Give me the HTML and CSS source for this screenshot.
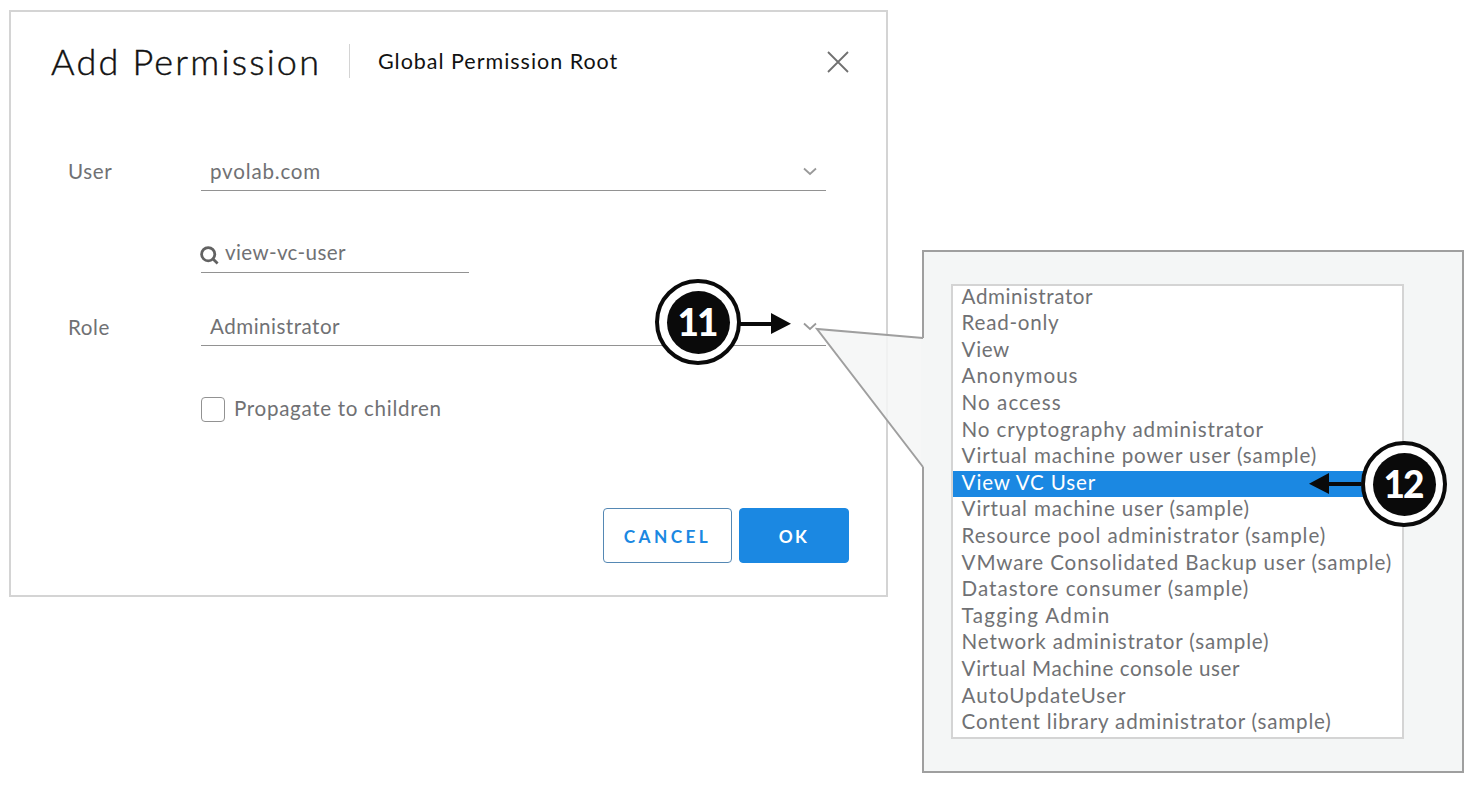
FILE: index.html
```html
<!DOCTYPE html>
<html lang="en">
<head>
<meta charset="utf-8">
<title>Add Permission</title>
<link rel="stylesheet" href="styles.css">
</head>
<body>
<main class="stage">
  <section class="dialog">
    <header class="dialog-header">
      <h1 class="title">Add Permission</h1>
      <span class="divider"></span>
      <span class="subtitle">Global Permission Root</span>
      <svg class="close" viewBox="0 0 22 22"><path d="M1 1L21 21M21 1L1 21"/></svg>
    </header>
    <div class="form">
      <div class="row row-user">
        <label class="label"><span class="t-user">User</span></label>
        <div class="select"><span class="t-domain">pvolab.com</span><svg class="chevron" viewBox="0 0 14 9"><path d="M1 1.5L7 7L13 1.5"/></svg></div>
      </div>
      <div class="row row-search">
        <div class="search"><svg class="magnifier" viewBox="0 0 19 19"><circle cx="8.2" cy="8.2" r="6.6"/><path d="M12.8 12.8L17.6 17.4"/></svg><span class="t-search">view-vc-user</span></div>
      </div>
      <div class="row row-role">
        <label class="label"><span class="t-role">Role</span></label>
        <div class="select"><span class="t-admin">Administrator</span><svg class="chevron" viewBox="0 0 14 9"><path d="M1 1.5L7 7L13 1.5"/></svg></div>
      </div>
      <div class="row row-check">
        <span class="checkbox"></span><span class="t-check">Propagate to children</span>
      </div>
    </div>
    <footer class="actions">
      <button class="button">CANCEL</button>
      <button class="button primary">OK</button>
    </footer>
  </section>

  <aside class="callout">
    <ul class="roles">
      <li><span class="r1">Administrator</span></li>
      <li><span class="r2">Read-only</span></li>
      <li><span class="r3">View</span></li>
      <li><span class="r4">Anonymous</span></li>
      <li><span class="r5">No access</span></li>
      <li><span class="r6">No cryptography administrator</span></li>
      <li><span class="r7">Virtual machine power user (sample)</span></li>
      <li class="selected"><span class="r8">View VC User</span></li>
      <li><span class="r9">Virtual machine user (sample)</span></li>
      <li><span class="r10">Resource pool administrator (sample)</span></li>
      <li><span class="r11">VMware Consolidated Backup user (sample)</span></li>
      <li><span class="r12">Datastore consumer (sample)</span></li>
      <li><span class="r13">Tagging Admin</span></li>
      <li><span class="r14">Network administrator (sample)</span></li>
      <li><span class="r15">Virtual Machine console user</span></li>
      <li><span class="r16">AutoUpdateUser</span></li>
      <li><span class="r17">Content library administrator (sample)</span></li>
    </ul>
  </aside>

  <svg class="pointer" viewBox="0 0 110 144">
    <path class="pointer-fill" d="M2 4L108 13V142Z"/>
    <path class="pointer-join" d="M106 13H110V142H106Z"/>
    <path class="pointer-line" d="M108 13L2 4L108 142"/>
  </svg>
  <svg class="arrow arrow-right" viewBox="0 0 52 22"><path d="M0 9H32V0L52 10.8L32 21V13H0Z"/></svg>
  <svg class="arrow arrow-left" viewBox="0 0 52 22"><path d="M52 9H20V0L0 10.8L20 21V13H52Z"/></svg>
  <div class="step step-11"><span>11</span></div>
  <div class="step step-12"><span>12</span></div>
</main>
</body>
</html>
```
FILE: styles.css
```css
* { box-sizing: border-box; }
body { margin: 0; background: #fff; font-family: Lato, "Open Sans", sans-serif; }
.stage {
  position: relative;
  display: flex;
  align-items: flex-start;
  width: 1481px;
  height: 788px;
  padding: 10px 17px 0 9px;
  gap: 34px;
  color: #707174;
  font-size: 20.6px;
  letter-spacing: 0.6px;
  white-space: nowrap;
  overflow: hidden;
}
.dialog {
  display: flex;
  flex-direction: column;
  width: 879px;
  height: 587px;
  border: 2px solid #d4d4d4;
}
.dialog-header {
  display: flex;
  align-items: center;
  height: 100px;
  padding: 0 37px 0 40px;
}
.title {
  width: 298px;
  margin: 0;
  padding-bottom: 2px;
  color: #111;
  font-size: 36px;
  font-weight: 300;
  letter-spacing: 2.2px;
  -webkit-text-stroke: 0.45px #111;
}
.divider { width: 1px; height: 34px; margin: -2px 28px 0 0; background: #d4d4d4; }
.subtitle { padding-bottom: 2px; color: #111; font-size: 21.5px; letter-spacing: 0.98px; }
.close { width: 22px; height: 22px; margin-left: auto; stroke: #707070; stroke-width: 1.8; fill: none; }
.form { display: flex; flex-direction: column; padding-left: 57px; }
.row { display: flex; align-items: center; }
.label { width: 133px; padding-bottom: 2px; }
.select {
  display: flex;
  align-items: center;
  justify-content: space-between;
  width: 625px;
  height: 38px;
  padding: 0 9px;
  border-bottom: 1px solid #929292;
}
.select span { padding-bottom: 2px; }
.chevron { width: 14px; height: 9px; fill: none; stroke: #999; stroke-width: 1.8; }
.row-user { height: 38px; margin-top: 41px; }
.row-search { margin: 44px 0 0 133px; }
.search { display: flex; align-items: center; width: 268px; height: 38px; gap: 7px; border-bottom: 1px solid #929292; }
.magnifier { width: 19px; height: 19px; margin: 4px -1px 0; fill: none; stroke: #626262; stroke-width: 2.8; }
.row-role { margin-top: 35px; }
.row-role .label, .row-role .select span { padding-bottom: 1px; }
.row-check { margin: 50px 0 1px 133px; gap: 9px; }
.checkbox { width: 24px; height: 25px; border: 1px solid #929292; border-radius: 4px; }
.t-domain { letter-spacing: 0.8px; }
.t-search { padding-bottom: 4px; letter-spacing: 0.35px; }
.t-admin { letter-spacing: 0.48px; }
.t-check { padding-bottom: 3px; letter-spacing: 0.68px; }
.actions { display: flex; justify-content: flex-end; gap: 7px; margin: auto 37px 32px 0; }
.button {
  width: 129px;
  height: 55px;
  padding: 1px 0 0;
  border: 1px solid #5588b4;
  border-radius: 4px;
  background: #fff;
  color: #1b88e2;
  font: 700 17.3px Lato, sans-serif;
  letter-spacing: 3.4px;
}
.primary { width: 110px; border-color: #1b88e2; background: #1b88e2; color: #fff; letter-spacing: 2.4px; }
.callout {
  width: 542px;
  height: 523px;
  margin-top: 240px;
  padding: 32px 0 0 27px;
  border: 2px solid #9f9f9f;
  background: #f4f6f6;
}
.roles {
  width: 453px;
  height: 455px;
  margin: 0;
  padding: 0;
  border: 2px solid #d4d4d4;
  background: #fff;
  list-style: none;
}
.roles li { height: 26.6px; padding-left: 8.6px; line-height: 23.4px; }
.roles li:first-child { height: 25.2px; line-height: 20.4px; }
.roles .selected { background: #1b88e2; color: #fff; }
.r2 { letter-spacing: 0.74px; }
.r4 { letter-spacing: 1px; }
.r5 { letter-spacing: 1.05px; }
.r6 { letter-spacing: 0.86px; }
.r7 { letter-spacing: 0.84px; }
.r8 { letter-spacing: 0.84px; }
.r9 { letter-spacing: 0.84px; }
.r10 { letter-spacing: 0.91px; }
.r11 { letter-spacing: 0.88px; }
.r12 { letter-spacing: 0.98px; }
.r13 { letter-spacing: 1.32px; }
.r14 { letter-spacing: 0.82px; }
.r16 { letter-spacing: 0.95px; }
.r17 { letter-spacing: 0.81px; }
.pointer { position: absolute; left: 815px; top: 325px; width: 110px; height: 144px; }
.pointer-fill { fill: #f4f6f6; fill-opacity: 0.85; }
.pointer-join { fill: #f4f6f6; }
.pointer-line { fill: none; stroke: #9f9f9f; stroke-width: 2; }
.arrow { position: absolute; width: 52px; height: 22px; fill: #0a0a0a; }
.arrow-right { left: 739px; top: 313px; }
.arrow-left { left: 1309px; top: 473px; }
.step {
  position: absolute;
  display: flex;
  align-items: center;
  justify-content: center;
  width: 86px;
  height: 86px;
  border: 4px solid #0a0a0a;
  border-radius: 50%;
  background: #fff;
}
.step span {
  width: 63px;
  height: 63px;
  border-radius: 50%;
  background: #0a0a0a;
  color: #fff;
  font-size: 37px;
  font-weight: 900;
  line-height: 62px;
  letter-spacing: -2px;
  text-indent: -2px;
  text-align: center;
}
.step-11 { left: 655px; top: 279px; }
.step-12 { left: 1361px; top: 441px; }
```
